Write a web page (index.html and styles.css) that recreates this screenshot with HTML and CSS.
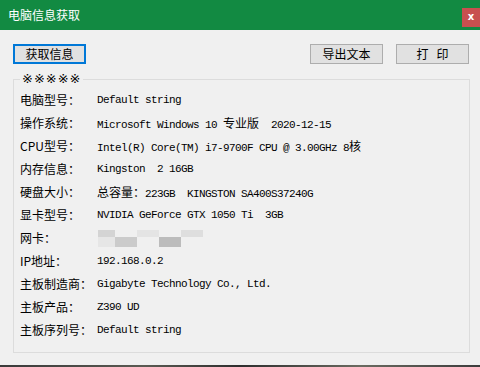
FILE: index.html
```html
<!DOCTYPE html>
<html>
<head>
  <meta charset="UTF-8">
  <title>电脑信息获取</title>
  <link rel="stylesheet" href="styles.css">
</head>
<body>

  <div class="window">
    <div class="titlebar">
      <span class="title">电脑信息获取</span>
      <span class="close">x</span>
    </div>

    <div class="toolbar">
      <button class="btn btn-focus">获取信息</button>
      <span class="spacer"></span>
      <button class="btn">导出文本</button>
      <button class="btn">打&nbsp;&nbsp;&nbsp;印</button>
    </div>

    <fieldset class="group">
      <legend>※※※※※</legend>
      <div class="row"><span class="label">电脑型号：</span><span class="value">Default string</span></div>
      <div class="row"><span class="label">操作系统：</span><span class="value">Microsoft Windows 10 <span class="cn">专业版</span>  2020-12-15</span></div>
      <div class="row"><span class="label">CPU型号：</span><span class="value">Intel(R) Core(TM) i7-9700F CPU @ 3.00GHz 8<span class="cn">核</span></span></div>
      <div class="row"><span class="label">内存信息：</span><span class="value">Kingston  2 16GB</span></div>
      <div class="row"><span class="label">硬盘大小：</span><span class="value"><span class="cn">总容量：</span>223GB  KINGSTON SA400S37240G</span></div>
      <div class="row"><span class="label">显卡型号：</span><span class="value">NVIDIA GeForce GTX 1050 Ti  3GB</span></div>
      <div class="row"><span class="label">网卡：</span>
        <span class="mac">
          <i style="background:#d4d4d4"></i><i style="background:#f0f0f0"></i><i style="background:#e4e4e4"></i><i style="background:#f0f0f0"></i><i style="background:#dedede"></i>
          <i style="background:#e6e6e6"></i><i style="background:#cbcbcb"></i><i style="background:#f0f0f0"></i><i style="background:#bcbcbc"></i><i style="background:#f0f0f0"></i>
        </span>
      </div>
      <div class="row"><span class="label">IP地址：</span><span class="value">192.168.0.2</span></div>
      <div class="row"><span class="label">主板制造商：</span><span class="value">Gigabyte Technology Co., Ltd.</span></div>
      <div class="row"><span class="label">主板产品：</span><span class="value">Z390 UD</span></div>
      <div class="row"><span class="label">主板序列号：</span><span class="value">Default string</span></div>
    </fieldset>
  </div>
  <div class="desk"></div>

</body>
</html>
```

FILE: styles.css
```css
body {
  margin: 0;
  width: 480px;
  height: 367px;
  overflow: hidden;
  font-family: "Noto Sans CJK SC", "Liberation Sans", sans-serif;
  font-size: 12px;
  color: #000;
}
.window {
  height: 365px;
  background: #f0f0f0;
}
.titlebar {
  height: 30px;
  background: #128a42;
  display: flex;
  align-items: flex-start;
  justify-content: space-between;
}
.title {
  color: #fff;
  font-size: 12px;
  line-height: 30px;
  padding-left: 8px;
}
.close {
  margin-top: 8px;
  width: 18px;
  height: 19px;
  background: #c8504f;
  color: #fff;
  font-family: "DejaVu Sans", sans-serif;
  font-weight: bold;
  font-size: 10px;
  line-height: 18px;
  text-align: center;
}
.toolbar {
  display: flex;
  padding: 14px 11px 0 13px;
}
.spacer {
  flex: 1;
}
.btn {
  width: 73px;
  height: 20px;
  margin: 0;
  padding: 0;
  border: 1px solid #adadad;
  background: #e1e1e1;
  font-family: "Noto Sans CJK SC", sans-serif;
  font-size: 12px;
  line-height: 18px;
  color: #000;
  white-space: pre;
}
.btn + .btn {
  margin-left: 13px;
}
.btn-focus {
  border: 2px solid #0078d7;
  line-height: 16px;
}
.group {
  margin: 9px 10px 0 13px;
  padding: 3px 6px 11px 6px;
  border: 1px solid #dcdcdc;
}
.group legend {
  padding: 0 2px;
  font-size: 13px;
  line-height: 12px;
  letter-spacing: 1px;
  font-family: "DejaVu Sans", sans-serif;
}
.row {
  display: flex;
  align-items: center;
  height: 23px;
}
.label {
  width: 77px;
  flex-shrink: 0;
}
.value {
  font-family: "Liberation Mono", monospace;
  font-size: 11px;
  letter-spacing: -0.6px;
  white-space: pre;
}
.cn {
  font-family: "Noto Sans CJK SC", sans-serif;
  font-size: 12px;
  letter-spacing: 0;
}
.mac {
  display: grid;
  grid-template-columns: 17px 22px 22px 22px 22px;
  grid-template-rows: 7px 10px;
  margin-left: 1px;
  margin-top: 1px;
}
.desk {
  height: 2px;
  background: linear-gradient(90deg, #3a3a3a, #5a5a52 30%, #2e2e2e 50%, #6a6a60 75%, #3c3c3c);
}
```
